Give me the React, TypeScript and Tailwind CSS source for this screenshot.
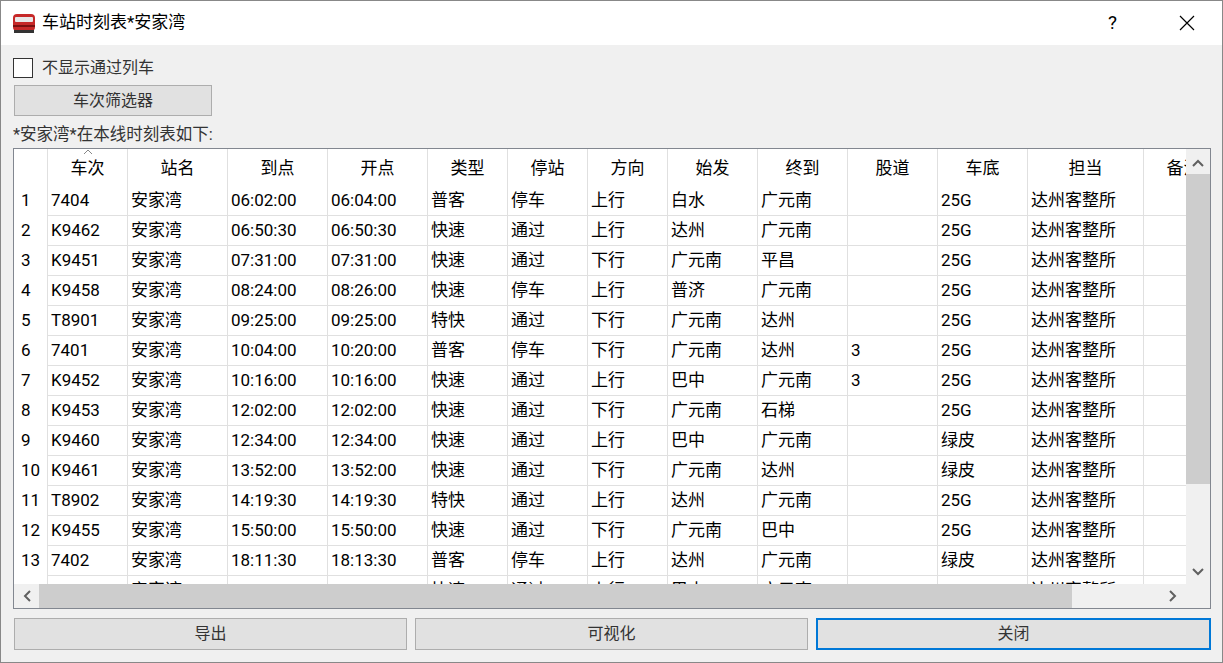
import React from "react";

const cols = [
  { n: "车次", w: 80 }, { n: "站名", w: 100 }, { n: "到点", w: 100 }, { n: "开点", w: 100 },
  { n: "类型", w: 80 }, { n: "停站", w: 80 }, { n: "方向", w: 80 }, { n: "始发", w: 90 },
  { n: "终到", w: 90 }, { n: "股道", w: 90 }, { n: "车底", w: 90 }, { n: "担当", w: 116 }, { n: "备注", w: 80 },
];
const rows = [
  ["7404","安家湾","06:02:00","06:04:00","普客","停车","上行","白水","广元南","","25G","达州客整所",""],
  ["K9462","安家湾","06:50:30","06:50:30","快速","通过","上行","达州","广元南","","25G","达州客整所",""],
  ["K9451","安家湾","07:31:00","07:31:00","快速","通过","下行","广元南","平昌","","25G","达州客整所",""],
  ["K9458","安家湾","08:24:00","08:26:00","快速","停车","上行","普济","广元南","","25G","达州客整所",""],
  ["T8901","安家湾","09:25:00","09:25:00","特快","通过","下行","广元南","达州","","25G","达州客整所",""],
  ["7401","安家湾","10:04:00","10:20:00","普客","停车","下行","广元南","达州","3","25G","达州客整所",""],
  ["K9452","安家湾","10:16:00","10:16:00","快速","通过","上行","巴中","广元南","3","25G","达州客整所",""],
  ["K9453","安家湾","12:02:00","12:02:00","快速","通过","下行","广元南","石梯","","25G","达州客整所",""],
  ["K9460","安家湾","12:34:00","12:34:00","快速","通过","上行","巴中","广元南","","绿皮","达州客整所",""],
  ["K9461","安家湾","13:52:00","13:52:00","快速","通过","下行","广元南","达州","","绿皮","达州客整所",""],
  ["T8902","安家湾","14:19:30","14:19:30","特快","通过","上行","达州","广元南","","25G","达州客整所",""],
  ["K9455","安家湾","15:50:00","15:50:00","快速","通过","下行","广元南","巴中","","25G","达州客整所",""],
  ["7402","安家湾","18:11:30","18:13:30","普客","停车","上行","达州","广元南","","绿皮","达州客整所",""],
  ["K9454","安家湾","18:30:00","18:30:00","快速","通过","上行","巴中","广元南","","25G","达州客整所",""],
];
const font = { fontFamily: '"Segoe UI", Roboto, "Noto Sans CJK SC", sans-serif' };

export default function App() {
  return (
    <div className="w-[1223px] h-[663px] bg-[#f0f0f0] border border-[#888] overflow-hidden relative text-[#000]" style={font}>
      <div className="h-[44px] bg-white flex items-center">
        <svg width="24" height="22" viewBox="0 0 24 22" className="ml-[11px]">
          <rect x="1" y="2" width="22" height="17" rx="4" fill="#c62828" />
          <rect x="3" y="5" width="18" height="5" rx="1" fill="#e8e8e8" />
          <rect x="1" y="13" width="22" height="2" fill="#7a1010" />
          <rect x="2" y="18" width="20" height="3" fill="#333" />
        </svg>
        <span className="ml-[6px] text-[17px]">车站时刻表*安家湾</span>
        <span className="ml-auto mr-[62px] text-[19px]">?</span>
        <svg width="16" height="16" viewBox="0 0 16 16" className="mr-[27px]"><path d="M1 1L15 15M15 1L1 15" stroke="#000" strokeWidth="1.2" /></svg>
      </div>
      <div className="px-[12px]">
        <div className="flex items-center mt-[12px] h-[22px]">
          <div className="w-[20px] h-[20px] border border-[#333] bg-white" />
          <span className="ml-[9px] text-[16px] text-[#333]">不显示通过列车</span>
        </div>
        <div className="mt-[6px] ml-[1px] w-[198px] h-[31px] bg-[#e1e1e1] border border-[#adadad] flex items-center justify-center text-[16px] text-[#333]">车次筛选器</div>
        <div className="mt-[5px] text-[16.5px] text-[#333] leading-[27px]">*安家湾*在本线时刻表如下:</div>
        <div className="w-[1198px] h-[461px] border border-[#828790] bg-white relative overflow-hidden text-[17px]">
          <div className="flex h-[37px]">
            <div className="w-[34px] shrink-0 border-r border-[#e0e0e0]" />
            {cols.map((c, i) => (
              <div key={i} className="shrink-0 border-r border-[#e0e0e0] flex items-center justify-center relative pt-[2px]" style={{ width: c.w }}>
                {i === 0 && <svg width="10" height="6" className="absolute top-[0px] left-[35px]"><path d="M1 5L5 1L9 5" stroke="#888" fill="none" /></svg>}
                {c.n}
              </div>
            ))}
          </div>
          {rows.map((r, ri) => (
            <div key={ri} className="flex h-[30px]">
              <div className="w-[34px] shrink-0 border-r border-[#e0e0e0] flex items-center pl-[7px]">{ri + 1}</div>
              {r.map((v, ci) => (
                <div key={ci} className="shrink-0 border-r border-b border-[#e0e0e0] flex items-center pl-[3px] whitespace-nowrap" style={{ width: cols[ci].w }}>{v}</div>
              ))}
            </div>
          ))}
          <div className="absolute right-0 top-0 w-[24px] h-[436px] bg-[#f0f0f0] flex flex-col items-center">
            <svg width="12" height="10" className="mt-[9px]"><path d="M1 8L6 3L11 8" stroke="#606060" strokeWidth="2" fill="none" /></svg>
            <div className="mt-[6px] w-[24px] h-[310px] bg-[#cdcdcd]" />
            <svg width="12" height="10" className="mt-auto mb-[8px]"><path d="M1 2L6 7L11 2" stroke="#606060" strokeWidth="2" fill="none" /></svg>
          </div>
          <div className="absolute left-0 bottom-0 w-full h-[24px] bg-[#f0f0f0] flex items-center">
            <svg width="10" height="12" className="ml-[8px]"><path d="M8 1L3 6L8 11" stroke="#606060" strokeWidth="2" fill="none" /></svg>
            <div className="ml-[7px] w-[1033px] h-[24px] bg-[#cdcdcd]" />
            <svg width="10" height="12" className="ml-auto mr-[32px]"><path d="M2 1L7 6L2 11" stroke="#606060" strokeWidth="2" fill="none" /></svg>
          </div>
        </div>
        <div className="flex gap-[8px] mt-[9px] ml-[1px] w-[1197px]">
          <div className="flex-1 h-[32px] bg-[#e1e1e1] border border-[#adadad] flex items-center justify-center text-[16px] text-[#333]">导出</div>
          <div className="flex-1 h-[32px] bg-[#e1e1e1] border border-[#adadad] flex items-center justify-center text-[16px] text-[#333]">可视化</div>
          <div className="flex-1 h-[32px] bg-[#e1e1e1] border-2 border-[#0078d7] flex items-center justify-center text-[16px] text-[#333]">关闭</div>
        </div>
      </div>
    </div>
  );
}
